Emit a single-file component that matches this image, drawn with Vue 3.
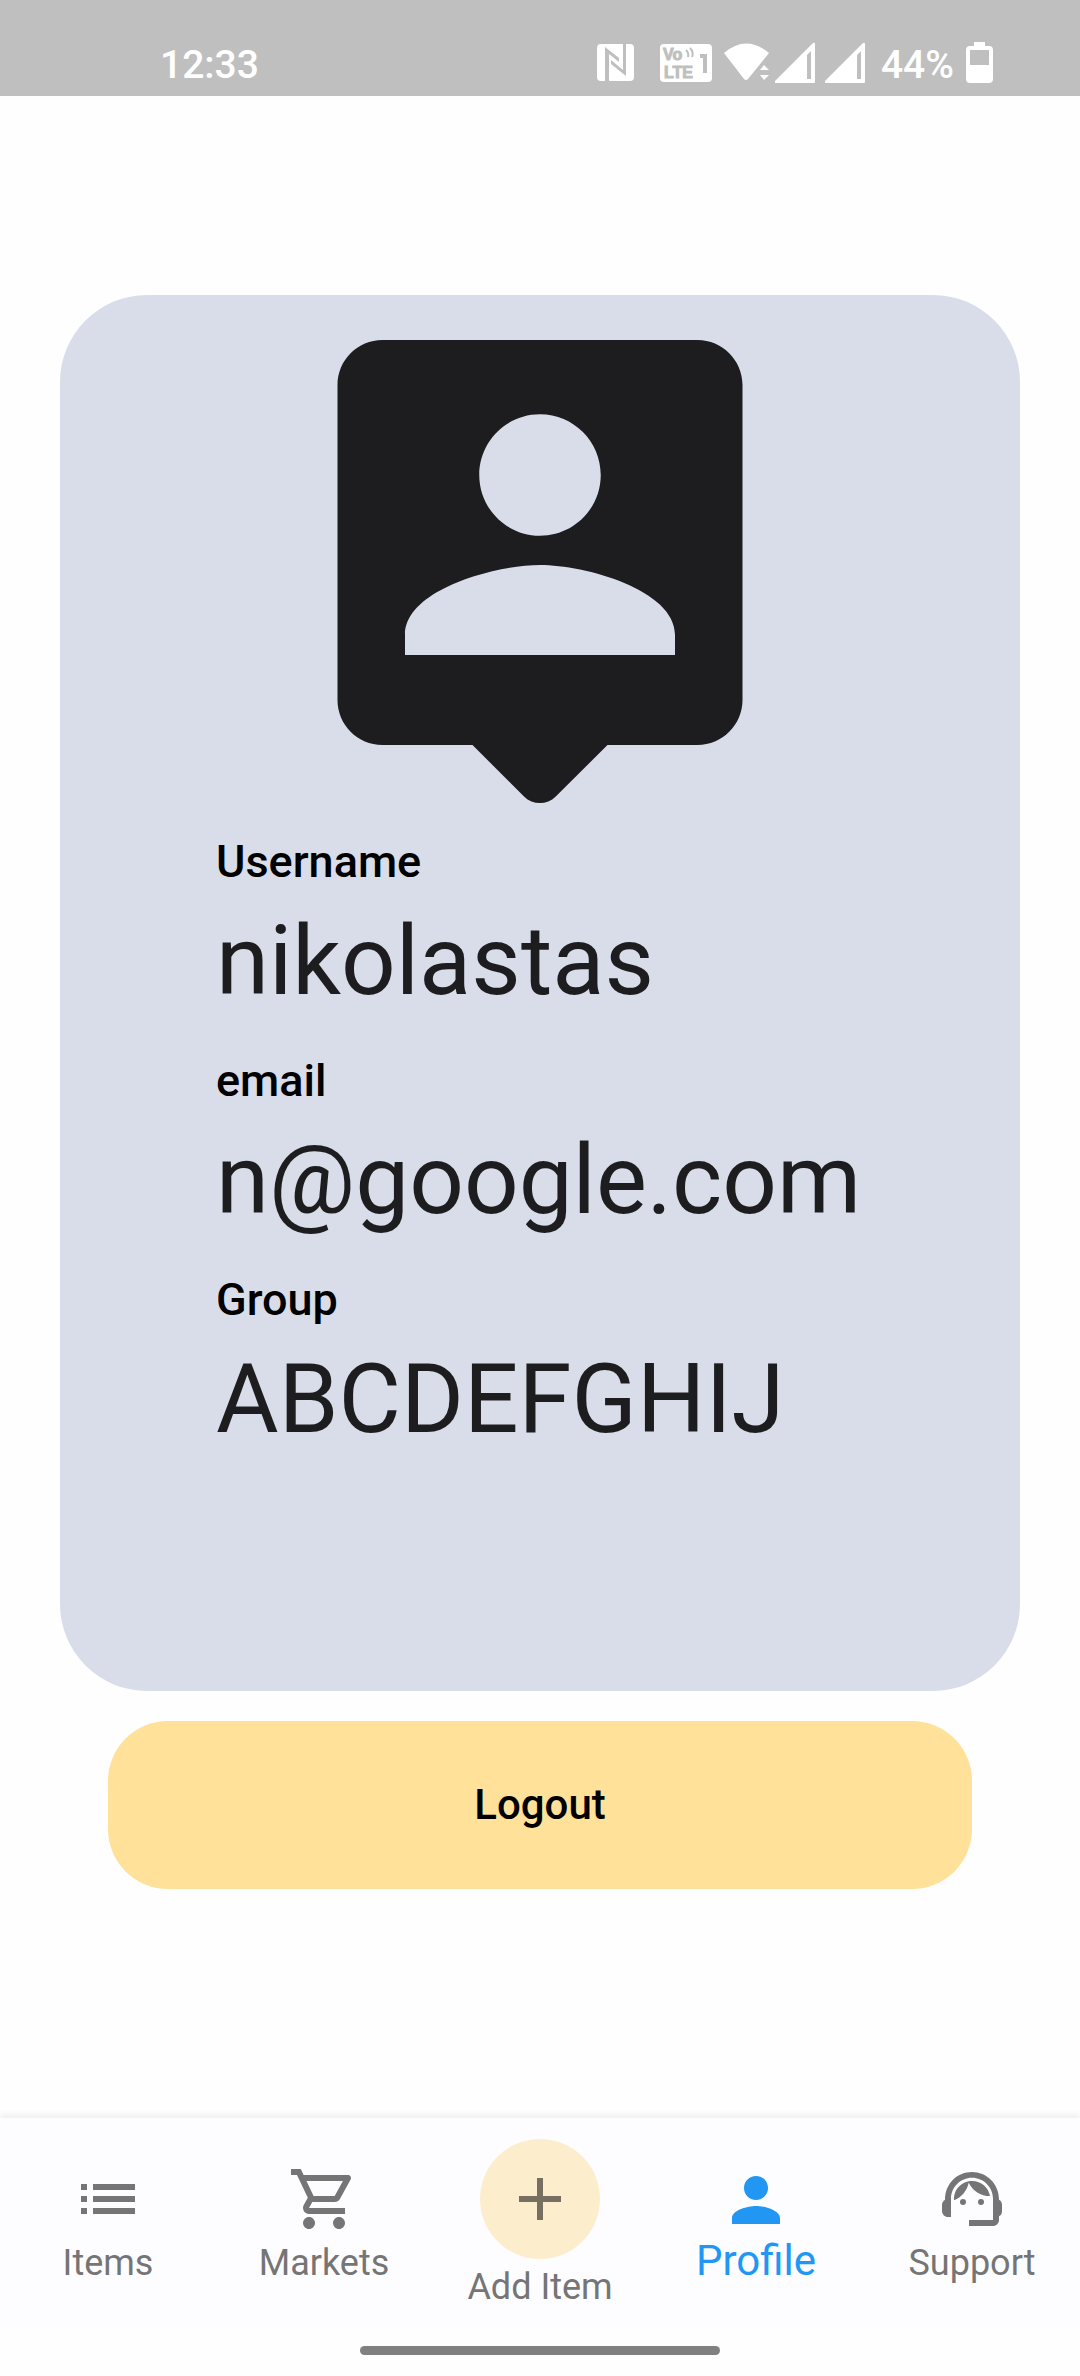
<script setup>
const fields = [
  { label: 'Username', value: 'nikolastas' },
  { label: 'email', value: 'n@google.com' },
  { label: 'Group', value: 'ABCDEFGHIJ' },
]

const tabs = [
  {
    name: 'Items',
    icon: 'M3 9h2V7H3v2zm0 4h2v-2H3v2zm0 4h2v-2H3v2zm4 0h14v-2H7v2zm0-4h14v-2H7v2zm0-6v2h14V7H7z',
  },
  {
    name: 'Markets',
    icon: 'M15.55 13c.75 0 1.41-.41 1.75-1.03l3.58-6.49c.37-.66-.11-1.48-.87-1.48H5.21l-.94-2H1v2h2l3.6 7.59-1.35 2.44C4.52 15.37 5.48 17 7 17h12v-2H7l1.1-2h7.45zM6.16 6h12.15l-2.76 5H8.53L6.16 6zM7 18c-1.1 0-1.99.9-1.99 2S5.9 22 7 22s2-.9 2-2-.9-2-2-2zm10 0c-1.1 0-1.99.9-1.99 2s.89 2 1.99 2 2-.9 2-2-.9-2-2-2z',
  },
  { name: 'Add Item', icon: 'M19 13h-6v6h-2v-6H5v-2h6V5h2v6h6v2z', round: true },
  {
    name: 'Profile',
    icon: 'M12 12c2.21 0 4-1.79 4-4s-1.79-4-4-4-4 1.79-4 4 1.79 4 4 4zm0 2c-2.67 0-8 1.34-8 4v2h16v-2c0-2.66-5.33-4-8-4z',
    active: true,
  },
  {
    name: 'Support',
    icon: 'M21 12.22C21 6.73 16.74 3 12 3c-4.69 0-9 3.65-9 9.28-.6.34-1 .98-1 1.72v2c0 1.1.9 2 2 2h1v-6.1c0-3.87 3.13-7 7-7s7 3.13 7 7V19h-8v2h8c1.1 0 2-.9 2-2v-1.22c.59-.31 1-.92 1-1.64v-2.3c0-.7-.41-1.31-1-1.62zM10 13a1 1 0 1 1-2 0 1 1 0 0 1 2 0zM16 13a1 1 0 1 1-2 0 1 1 0 0 1 2 0zM18 11.03C17.52 8.18 15.04 6 12.05 6c-3.03 0-6.29 2.51-6.03 6.45 2.47-1.01 4.33-3.21 4.86-5.89 1.31 2.63 4 4.44 7.12 4.47z',
  },
]
</script>

<template>
  <div class="screen">
    <header class="status">
      <span class="clock">12:33</span>
      <div class="indicators">
        <svg class="nfc" width="37" height="38" viewBox="0 0 37 38">
          <rect width="37" height="37" rx="4" fill="#fff" />
          <path fill="#bfbfbf" d="M8 3L22 14V18L12 10V38H8zM29 0V32L14 20V16L26 26V0z" />
        </svg>
        <svg class="volte" width="52" height="38" viewBox="0 0 52 38">
          <rect width="52" height="38" rx="4" fill="#fff" />
          <g fill="#bfbfbf" stroke="#bfbfbf" stroke-width="1" font-family="Liberation Sans, sans-serif" font-size="16" font-weight="700">
            <text x="3" y="16">Vo</text>
            <text x="4" y="34">LTE</text>
          </g>
          <path d="M26 6q3 3 2 7M30 4q4 4 2 9" fill="none" stroke="#bfbfbf" stroke-width="2" />
          <path d="M40 12h5v17" fill="none" stroke="#bfbfbf" stroke-width="4" />
        </svg>
        <svg class="wifi" width="46" height="38" viewBox="0 0 46 38">
          <path fill="#fff" d="M0 10Q22-9 45 10L24 36Q22 38 20 36zM36 27l4-5 5 5zM36 32h9l-5 5z" />
        </svg>
        <svg v-for="n in 2" :key="n" class="signal" width="40" height="42" viewBox="0 0 40 42">
          <path fill="#fff" fill-rule="evenodd" d="M0 39L38 1Q40 0 40 2V40Q40 41 39 41H1Q-1 41 0 39zM32 13V37H36V9z" />
        </svg>
        <span class="percent">44%</span>
        <svg class="battery" width="27" height="42" viewBox="0 0 27 42">
          <path fill="#fff" fill-rule="evenodd" d="M8 0H19V4H23Q27 4 27 8V37Q27 41 23 41H4Q0 41 0 37V8Q0 4 4 4H8zM4 8V23H23V8z" />
        </svg>
      </div>
    </header>

    <main class="content">
      <section class="card">
        <svg class="avatar" viewBox="0 0 24 24">
          <path d="M19 2H5c-1.11 0-2 .9-2 2v14c0 1.1.89 2 2 2h4l2.29 2.29c.39.39 1.02.39 1.41 0L15 20h4c1.1 0 2-.9 2-2V4c0-1.1-.9-2-2-2zm-7 3.3c1.49 0 2.7 1.21 2.7 2.7s-1.21 2.7-2.7 2.7S9.3 9.49 9.3 8s1.21-2.7 2.7-2.7zM18 16H6v-.9c0-2 4-3.1 6-3.1s6 1.1 6 3.1v.9z" />
        </svg>
        <dl class="fields">
          <div v-for="field in fields" :key="field.label" class="field">
            <dt>{{ field.label }}</dt>
            <dd>{{ field.value }}</dd>
          </div>
        </dl>
      </section>
      <button class="logout" type="button">Logout</button>
    </main>

    <nav class="tabs">
      <a v-for="tab in tabs" :key="tab.name" href="#" class="tab" :class="{ active: tab.active }">
        <span class="glyph" :class="{ round: tab.round }">
          <svg width="72" height="72" viewBox="0 0 24 24"><path :d="tab.icon" fill="currentColor" /></svg>
        </span>
        <span class="name">{{ tab.name }}</span>
      </a>
    </nav>
    <div class="gesture"><span class="handle"></span></div>
  </div>
</template>

<style>
body {
  margin: 0;
  background: #fefefe;
}
</style>

<style scoped>
.screen {
  display: flex;
  flex-direction: column;
  min-height: 100vh;
  font-family: Roboto, 'Liberation Sans', sans-serif;
  background: #fefefe;
}

.status {
  display: flex;
  justify-content: space-between;
  align-items: flex-end;
  box-sizing: border-box;
  height: 96px;
  padding: 0 87px 12px 160px;
  background: #bfbfbf;
  color: #fff;
  font-size: 39px;
  font-weight: 500;
  line-height: 38px;
}

.indicators {
  display: flex;
  align-items: flex-end;
}

.nfc {
  margin-bottom: 2px;
}

.volte {
  margin: 0 12px 2px 26px;
}

.wifi {
  margin: 0 5px 3px 0;
}

.signal {
  margin-right: 10px;
}

.percent {
  margin: 0 12px 0 6px;
}

.content {
  flex: 1;
  display: flex;
  flex-direction: column;
  align-items: stretch;
  padding: 199px 60px 0;
}

.card {
  display: flex;
  flex-direction: column;
  align-items: center;
  padding-bottom: 199px;
  border-radius: 87px;
  background: #d8dde9;
}

.avatar {
  width: 56.25%;
  fill: #1d1d1f;
}

.fields {
  box-sizing: border-box;
  width: 100%;
  margin: 0;
  padding: 0 156px;
}

.field {
  padding-bottom: 37px;
}

dt {
  margin-bottom: 17px;
  color: #000;
  font-size: 45px;
  font-weight: 500;
  line-height: 53px;
}

dd {
  margin: 0;
  color: #1d1d1f;
  font-size: 96px;
  line-height: 112px;
}

.logout {
  margin: 30px 48px 0;
  padding: 0;
  height: 168px;
  border: 0;
  border-radius: 60px;
  background: #ffe199;
  color: #000;
  font: 500 42px/48px Roboto, sans-serif;
}

.tabs {
  display: flex;
  height: 210px;
  background: #fdfdff;
  box-shadow: 0 -4px 5px rgba(0, 0, 0, 0.05);
}

.tab {
  flex: 1;
  display: flex;
  flex-direction: column;
  align-items: center;
  justify-content: center;
  gap: 7px;
  color: #757575;
  font-size: 36px;
  line-height: 42px;
  text-decoration: none;
  white-space: nowrap;
}

.glyph {
  display: flex;
  align-items: center;
  justify-content: center;
  height: 72px;
}

.round {
  width: 120px;
  height: 120px;
  border-radius: 50%;
  background: #fceecd;
  color: #776f60;
}

.active {
  gap: 4px;
  color: #2196f3;
  font-size: 42px;
}

.gesture {
  display: flex;
  justify-content: center;
  align-items: flex-start;
  box-sizing: border-box;
  height: 48px;
  padding-top: 18px;
  background: #fefefe;
}

.handle {
  width: 33.333%;
  height: 9px;
  border-radius: 5px;
  background: #808080;
}
</style>
